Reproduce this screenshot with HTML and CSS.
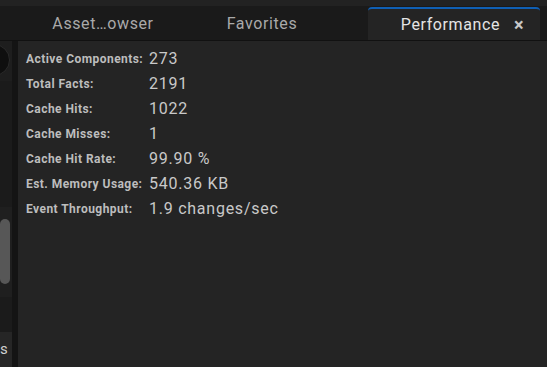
FILE: index.html
```html
<!DOCTYPE html>
<html lang="en">
<head>
    <meta charset="UTF-8">
    <title>Performance</title>
    <link rel="stylesheet" href="styles.css">
</head>
<body>
    <div class="top-strip"></div>
    <div class="tab-bar">
        <div class="tab tab-asset">Asset…owser</div>
        <div class="tab tab-fav">Favorites</div>
        <div class="tab active">
            <span class="tab-label">Performance</span>
            <span class="tab-close">×</span>
        </div>
    </div>

    <div class="main">
        <div class="side">
            <div class="side-top">
                <div class="knob"></div>
            </div>
            <div class="side-track">
                <div class="scroll-thumb"></div>
            </div>
            <div class="side-gap"></div>
            <div class="side-btn">s</div>
        </div>
        <div class="divider"></div>

        <div class="stats">
            <div class="row"><span class="label">Active Components:</span><span class="value">273</span></div>
            <div class="row"><span class="label">Total Facts:</span><span class="value">2191</span></div>
            <div class="row"><span class="label">Cache Hits:</span><span class="value">1022</span></div>
            <div class="row"><span class="label">Cache Misses:</span><span class="value">1</span></div>
            <div class="row"><span class="label">Cache Hit Rate:</span><span class="value">99.90 %</span></div>
            <div class="row"><span class="label">Est. Memory Usage:</span><span class="value">540.36 KB</span></div>
            <div class="row"><span class="label">Event Throughput:</span><span class="value">1.9 changes/sec</span></div>
        </div>
    </div>
</body>
</html>
```

FILE: styles.css
```css
body {
    margin: 0;
    width: 547px;
    height: 367px;
    overflow: hidden;
    background: #242424;
    font-family: Roboto, "Liberation Sans", sans-serif;
}

.top-strip {
    height: 6px;
    background: #222;
}

.tab-bar {
    display: flex;
    height: 34px;
    background: #1a1a1a;
    border-bottom: 1px solid #111;
}

.tab {
    display: flex;
    align-items: center;
    justify-content: center;
    font-size: 16px;
    letter-spacing: 0.6px;
    color: #a9a9a9;
}

.tab-asset {
    width: 206px;
}

.tab-fav {
    width: 112px;
}

.tab.active {
    margin-left: 50px;
    margin-top: 1px;
    width: 172px;
    background: #242424;
    border-radius: 4px 4px 0 0;
    border-top: 2px solid #0f5fb4;
    box-sizing: border-box;
    color: #e4e4e4;
    padding-left: 17px;
}

.tab-close {
    margin-left: 14px;
    font-size: 18px;
    font-weight: bold;
    color: #c8c8c8;
}

.main {
    display: flex;
    height: 326px;
}

.side {
    width: 12px;
    display: flex;
    flex-direction: column;
    background: #1b1b1b;
}

.side-top {
    height: 40px;
    position: relative;
    overflow: hidden;
    background: #1e1e1e;
}

.knob {
    position: absolute;
    left: -22px;
    top: 3px;
    width: 30px;
    height: 30px;
    border-radius: 50%;
    background: #0f0f0f;
    border: 1px solid #2a2a2a;
}

.side-track {
    margin-top: 126px;
    height: 90px;
    background: #1f1f1f;
    padding-top: 12px;
    box-sizing: border-box;
}

.scroll-thumb {
    width: 10px;
    height: 65px;
    border-radius: 5px;
    background: #575757;
}

.side-gap {
    flex: 1;
}

.side-btn {
    height: 35px;
    background: #262626;
    color: #d0d0d0;
    font-size: 15px;
    line-height: 34px;
    overflow: hidden;
}

.divider {
    width: 6px;
    background: #141414;
}

.stats {
    flex: 1;
    padding: 5px 0 0 8px;
}

.row {
    display: flex;
    align-items: center;
    height: 25px;
}

.label {
    width: 123px;
    font-size: 12px;
    font-weight: bold;
    letter-spacing: 0.45px;
    color: #bdbdbd;
}

.value {
    font-size: 16px;
    letter-spacing: 0.75px;
    color: #c9c9c9;
}
```
